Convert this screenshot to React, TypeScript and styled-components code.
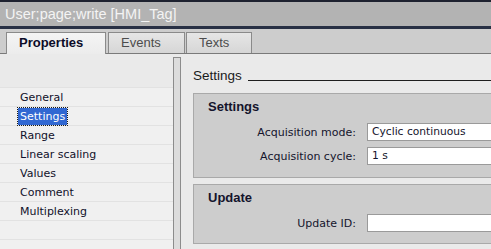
import React from "react";
import styled, { createGlobalStyle } from "styled-components";

const Global = createGlobalStyle`
  html, body { margin: 0; padding: 0; background: #eaeaea; overflow: hidden; }
  * { box-sizing: border-box; }
`;

const Frame = styled.div`
  width: 491px;
  height: 249px;
  display: flex;
  flex-direction: column;
  overflow: hidden;
  background: #eaeaea;
`;

const TopEdge = styled.div`
  height: 2px;
  background: #1e2230;
`;

const TitleBar = styled.div`
  height: 24px;
  line-height: 24px;
  padding-left: 5px;
  background: #b3b3b3;
  color: #f4f4f4;
  font-family: "Liberation Sans", Arial, sans-serif;
  font-size: 14.5px;
  white-space: nowrap;
`;

const TitleRule = styled.div`
  height: 3px;
  background: #283044;
`;

const TabStrip = styled.div`
  height: 25px;
  display: flex;
  align-items: flex-end;
  padding-left: 6px;
  gap: 1px;
  background: #cdcdcd;
  border-bottom: 1px solid #7a7a7a;
`;

const Tab = styled.div<{ $active?: boolean; $w: number }>`
  width: ${(p) => p.$w}px;
  height: ${(p) => (p.$active ? 22 : 21)}px;
  margin-bottom: ${(p) => (p.$active ? -1 : 0)}px;
  margin-right: ${(p) => (p.$active ? 1 : 0)}px;
  padding-left: 12px;
  line-height: 20px;
  border: 1px solid #8a8a8a;
  border-bottom: none;
  background: ${(p) =>
    p.$active
      ? "linear-gradient(#f4f4f4, #ececec)"
      : "linear-gradient(#e6e6e6, #d6d6d6)"};
  color: ${(p) => (p.$active ? "#0c0c28" : "#4c4c4c")};
  font-family: "Liberation Sans", Arial, sans-serif;
  font-size: 13px;
  font-weight: ${(p) => (p.$active ? 700 : 400)};
  position: relative;
  z-index: ${(p) => (p.$active ? 1 : 0)};
`;

const Body = styled.div`
  flex: 1;
  display: flex;
  min-height: 0;
`;

const Sidebar = styled.div`
  width: 173px;
  flex-shrink: 0;
  padding-top: 33px;
  background: #eaeaea;
`;

const NavList = styled.div`
  border-top: 1px solid #e2e2e2;
  background: #f0f0f0;
  height: 100%;
`;

const NavRow = styled.div`
  height: 19px;
  border-bottom: 1px solid #e2e2e2;
  padding-left: 18px;
  display: flex;
  align-items: center;
  font-family: "DejaVu Sans", Verdana, sans-serif;
  font-size: 11px;
  color: #10102a;
`;

const NavLabel = styled.span<{ $selected?: boolean }>`
  padding: 1px 2px;
  line-height: 15px;
  background: ${(p) => (p.$selected ? "#3168d2" : "transparent")};
  color: ${(p) => (p.$selected ? "#ffffff" : "inherit")};
  outline: ${(p) => (p.$selected ? "1px dotted #1a1a1a" : "none")};
`;

const Splitter = styled.div`
  width: 8px;
  flex-shrink: 0;
  margin-top: 3px;
  background: #dcdcdc;
  border: 1px solid #8c8c8c;
  border-bottom: none;
`;

const Content = styled.div`
  flex: 1;
  min-width: 0;
  overflow: hidden;
  padding: 14px 0 0 12px;
  display: flex;
  flex-direction: column;
`;

const Heading = styled.div`
  display: flex;
  align-items: flex-end;
  height: 16px;
  margin-bottom: 9px;
  font-family: "Liberation Sans", Arial, sans-serif;
  font-size: 13.5px;
  color: #1a1a1a;
  line-height: 16px;
  white-space: nowrap;
`;

const HeadingRule = styled.div`
  flex: 1;
  margin-left: 6px;
  margin-bottom: 3px;
  border-bottom: 1px solid #1e1e1e;
`;

const Group = styled.div<{ $mb?: number }>`
  width: 420px;
  flex-shrink: 0;
  background: #cdcdcd;
  border: 1px solid #a9a9a9;
  padding: 5px 0 0 0;
  margin-bottom: ${(p) => p.$mb ?? 0}px;
`;

const GroupTitle = styled.div<{ $mb: number }>`
  padding-left: 14px;
  height: 16px;
  line-height: 16px;
  margin-bottom: ${(p) => p.$mb}px;
  font-family: "Liberation Sans", Arial, sans-serif;
  font-size: 13px;
  font-weight: 700;
  color: #14142c;
`;

const FieldRow = styled.div<{ $mb: number }>`
  display: grid;
  grid-template-columns: 162px 200px;
  column-gap: 11px;
  align-items: center;
  margin-bottom: ${(p) => p.$mb}px;
`;

const Label = styled.div`
  text-align: right;
  font-family: "DejaVu Sans", Verdana, sans-serif;
  font-size: 11px;
  color: #14142c;
  white-space: nowrap;
`;

const Input = styled.div`
  height: 18px;
  background: #ffffff;
  border: 1px solid #9a9a9a;
  padding-left: 4px;
  line-height: 16px;
  font-family: "DejaVu Sans", Verdana, sans-serif;
  font-size: 10.7px;
  color: #14142c;
  white-space: nowrap;
`;

const navItems = [
  "General",
  "Settings",
  "Range",
  "Linear scaling",
  "Values",
  "Comment",
  "Multiplexing",
  "",
  "",
];

export default function App() {
  return (
    <Frame>
      <Global />
      <TopEdge />
      <TitleBar>User;page;write [HMI_Tag]</TitleBar>
      <TitleRule />
      <TabStrip>
        <Tab $active $w={100}>Properties</Tab>
        <Tab $w={77}>Events</Tab>
        <Tab $w={66}>Texts</Tab>
      </TabStrip>
      <Body>
        <Sidebar>
          <NavList>
            {navItems.map((n, i) => (
              <NavRow key={i}>
                {n && <NavLabel $selected={n === "Settings"}>{n}</NavLabel>}
              </NavRow>
            ))}
          </NavList>
        </Sidebar>
        <Splitter />
        <Content>
          <Heading>
            Settings
            <HeadingRule />
          </Heading>
          <Group $mb={6}>
            <GroupTitle $mb={8}>Settings</GroupTitle>
            <FieldRow $mb={6}>
              <Label>Acquisition mode:</Label>
              <Input>Cyclic continuous</Input>
            </FieldRow>
            <FieldRow $mb={12}>
              <Label>Acquisition cycle:</Label>
              <Input>1 s</Input>
            </FieldRow>
          </Group>
          <Group>
            <GroupTitle $mb={8}>Update</GroupTitle>
            <FieldRow $mb={11}>
              <Label>Update ID:</Label>
              <Input />
            </FieldRow>
          </Group>
        </Content>
      </Body>
    </Frame>
  );
}
